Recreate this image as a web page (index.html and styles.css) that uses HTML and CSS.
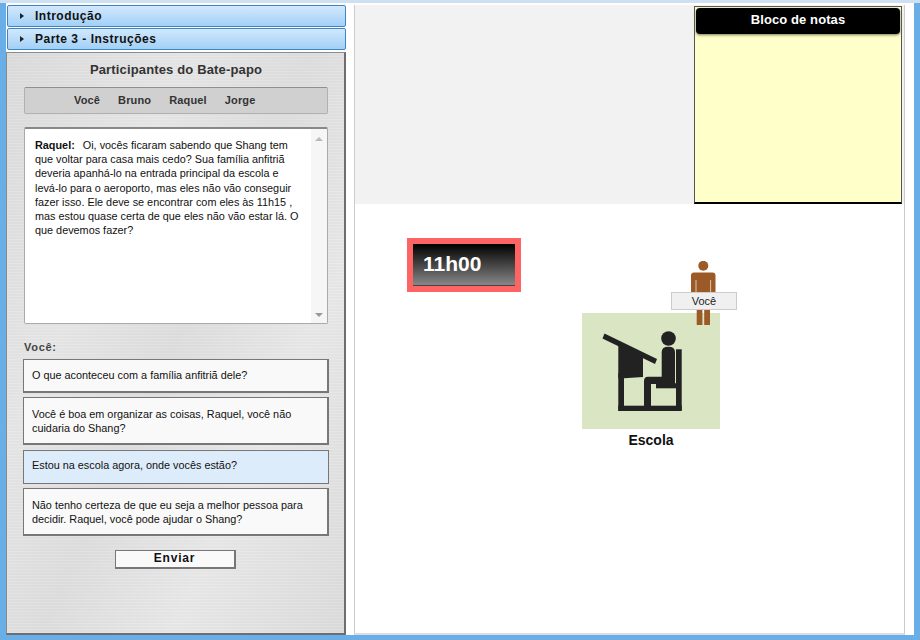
FILE: index.html
```html
<!DOCTYPE html>
<html lang="pt-BR">
<head>
  <meta charset="UTF-8">
  <title>Bate-papo</title>
  <link rel="stylesheet" href="styles.css">
</head>
<body>
  <div class="frame">
    <div class="left-col">
      <div class="acc-bar"><span class="acc-arrow"></span>Introdução</div>
      <div class="acc-bar"><span class="acc-arrow"></span>Parte 3 - Instruções</div>
      <div class="panel">
        <h2 class="panel-title">Participantes do Bate-papo</h2>
        <div class="people">
          <span>Você</span>
          <span>Bruno</span>
          <span>Raquel</span>
          <span>Jorge</span>
        </div>
        <div class="chat">
          <p class="chat-text"><strong class="speaker">Raquel:</strong>Oi, vocês ficaram sabendo que Shang tem que voltar para casa mais cedo? Sua família anfitriã deveria apanhá-lo na entrada principal da escola e levá-lo para o aeroporto, mas eles não vão conseguir fazer isso. Ele deve se encontrar com eles às 11h15 , mas estou quase certa de que eles não vão estar lá. O que devemos fazer?</p>
          <div class="scroll">
            <span class="scroll-up"></span>
            <span class="scroll-down"></span>
          </div>
        </div>
        <div class="you-label">Você:</div>
        <div class="options">
          <div class="option one-line">O que aconteceu com a família anfitriã dele?</div>
          <div class="option">Você é boa em organizar as coisas, Raquel, você não cuidaria do Shang?</div>
          <div class="option one-line selected">Estou na escola agora, onde vocês estão?</div>
          <div class="option">Não tenho certeza de que eu seja a melhor pessoa para decidir. Raquel, você pode ajudar o Shang?</div>
        </div>
        <button class="send-btn">Enviar</button>
      </div>
    </div>
    <div class="stage">
      <div class="stage-top">
        <div class="notes">
          <div class="notes-head">Bloco de notas</div>
        </div>
      </div>
      <div class="map">
        <div class="clock"><span>11h00</span></div>
        <div class="place">
          <svg class="place-icon" viewBox="0 0 138 116" width="138" height="116">
            <rect width="138" height="116" fill="#dae5c3"/>
            <g fill="#222">
              <!-- desk -->
              <path d="M22.500 20.500 L75 46 L73 51 L20.500 25.500 Z"/>
              <path d="M36.300 31 L61 43 L61 64 L42 65.300 L36.300 65.300 Z"/>
              <rect x="36.300" y="60" width="5.700" height="38"/>
              <rect x="36.300" y="92.700" width="63.400" height="5.300"/>
              <!-- chair -->
              <rect x="94" y="36.300" width="5.700" height="61"/>
              <rect x="74" y="70.300" width="20" height="5"/>
              <!-- person -->
              <circle cx="86.500" cy="25.500" r="7.300"/>
              <path d="M79.700 39 Q79.700 33.700 86.400 33.700 Q93 33.700 93 39 L93 71 L79.700 71 L69 71 L69 93 L62 93 L62 68 Q62 63.700 66 63.700 L79.700 63.700 Z"/>
            </g>
          </svg>
          <div class="place-name">Escola</div>
        </div>
        <div class="avatar">
          <svg viewBox="0 0 25 65" width="25" height="65">
            <g fill="#9c5a26">
              <circle cx="12.300" cy="4.800" r="5"/>
              <path d="M3 11.500 H21.500 Q24.500 11.500 24.500 14.500 V36 H19 V64 H13.200 V42 H11.400 V64 H5.700 V36 H0 V14.500 Q0 11.500 3 11.500 Z"/>
            </g>
            <path d="M5 19 V36 M19.600 19 V36" stroke="#d9c6b4" stroke-width="1" fill="none"/>
          </svg>
          <div class="avatar-name">Você</div>
        </div>
      </div>
    </div>
  </div>
</body>
</html>
```

FILE: styles.css
```css
html, body {
  margin: 0;
  height: 100%;
}
body {
  font-family: "Liberation Sans", Arial, sans-serif;
  overflow: hidden;
}
.frame {
  width: 920px;
  height: 640px;
  box-sizing: border-box;
  display: flex;
  gap: 8px;
  padding: 2px 6px 5px 6px;
  background-color: #6aaee8;
  border-top: 3px solid #cfe0f2;
  position: relative;
}
.frame::before {
  content: "";
  position: absolute;
  top: 0;
  left: 6px;
  right: 6px;
  bottom: 5px;
  background-color: #fff;
}
.left-col {
  width: 340px;
  display: flex;
  flex-direction: column;
  position: relative;
}
.acc-bar {
  height: 22px;
  margin: 0 0 1px 1px;
  box-sizing: border-box;
  border: 1px solid #3c86c8;
  border-radius: 2px;
  background: linear-gradient(#d2e8fc, #a2d0f7);
  color: #111;
  font-size: 12px;
  font-weight: bold;
  padding-left: 12px;
  display: flex;
  align-items: center;
  letter-spacing: 0.5px;
}
.acc-arrow {
  width: 0;
  height: 0;
  border-left: 4px solid #222;
  border-top: 3.5px solid transparent;
  border-bottom: 3.5px solid transparent;
  margin-right: 11px;
}
.panel {
  flex: 1;
  margin-top: 1px;
  box-sizing: border-box;
  padding: 0 16px 0 17px;
  border: 1px solid #8a8a8a;
  border-right: 2px solid #6e6e6e;
  border-bottom: 2px solid #6e6e6e;
  background: repeating-linear-gradient(0deg, rgba(255,255,255,0.07) 0 1px, rgba(0,0,0,0.01) 1px 3px), linear-gradient(115deg, #dcdcdc 0%, #e6e6e6 30%, #dedede 50%, #e8e8e8 72%, #dcdcdc 100%);
  display: flex;
  flex-direction: column;
}
.panel-title {
  margin: 9px 0 0;
  height: 25px;
  font-size: 13px;
  line-height: 16px;
  font-weight: bold;
  letter-spacing: 0.15px;
  color: #333;
  text-align: center;
}
.people {
  height: 27px;
  box-sizing: border-box;
  padding: 0 0 2px 49px;
  border: 1px solid #b0b0b0;
  border-top-color: #8f8f8f;
  border-radius: 2px;
  background-color: #d0d0d0;
  display: flex;
  align-items: center;
  gap: 18px;
  font-size: 11px;
  font-weight: bold;
  letter-spacing: 0.15px;
  color: #333;
}
.chat {
  height: 197px;
  margin-top: 13px;
  box-sizing: border-box;
  border: 1px solid #aaa;
  border-top: 2px solid #888;
  border-radius: 2px;
  background-color: #fff;
  display: flex;
}
.chat-text {
  flex: 1;
  margin: 0;
  padding: 9px 8px 0 10px;
  font-size: 10.850px;
  line-height: 14.200px;
  color: #111;
}
.speaker {
  margin-right: 8px;
}
.scroll {
  width: 16px;
  background-color: #f6f6f6;
  display: flex;
  flex-direction: column;
  justify-content: space-between;
  align-items: center;
  padding: 8px 0 6px;
}
.scroll-up, .scroll-down {
  width: 0;
  height: 0;
  border-left: 4px solid transparent;
  border-right: 4px solid transparent;
}
.scroll-up {
  border-bottom: 4px solid #bbb;
}
.scroll-down {
  border-top: 4px solid #999;
}
.you-label {
  margin-top: 16px;
  height: 19px;
  font-size: 11px;
  line-height: 14px;
  font-weight: bold;
  color: #444;
  letter-spacing: 0.7px;
}
.options {
  margin: 0 -1px;
  display: flex;
  flex-direction: column;
  gap: 4px;
}
.option {
  box-sizing: border-box;
  min-height: 34px;
  padding: 9px 8px 8px 8px;
  border: 1px solid #777;
  border-right-width: 2px;
  border-bottom-width: 2px;
  background-color: #f9f9f9;
  font-size: 10.850px;
  line-height: 14px;
  color: #111;
}
.option.one-line {
  padding-top: 8px;
}
.option.selected {
  margin-top: 1px;
  padding-top: 7px;
  border-width: 1px;
  background-color: #ddecfa;
}
.send-btn {
  align-self: center;
  width: 121px;
  height: 19px;
  margin: 14px 2px 0 0;
  padding: 0 0 2px;
  border: 1px solid #777;
  border-right-width: 2px;
  border-bottom-width: 2px;
  background-color: #f9f9f9;
  font-family: inherit;
  font-size: 12px;
  font-weight: bold;
  letter-spacing: 0.8px;
  color: #111;
}
.stage {
  width: 551px;
  box-sizing: border-box;
  position: relative;
  border-left: 1px solid #ccc;
  border-right: 1px solid #ccc;
  border-bottom: 2px solid #ddd;
  background-color: #fff;
  display: flex;
  flex-direction: column;
}
.stage-top {
  height: 199px;
  background-color: #f2f2f2;
  display: flex;
  justify-content: flex-end;
  padding-right: 2px;
}
.notes {
  width: 208px;
  height: 198px;
  margin-top: 1px;
  box-sizing: border-box;
  border: 1px solid #555;
  border-bottom: 2px solid #000;
  background-color: #ffffc9;
  padding: 1px;
}
.notes-head {
  height: 26px;
  border-radius: 4px;
  background-color: #000;
  box-shadow: 0 1px 3px #77775a;
  color: #fff;
  font-size: 13px;
  font-weight: bold;
  line-height: 23px;
  text-align: center;
  letter-spacing: 0.1px;
}
.map {
  flex: 1;
  position: relative;
}
.clock {
  position: absolute;
  left: 52px;
  top: 34px;
  width: 114px;
  height: 54px;
  box-sizing: border-box;
  border: 6px solid #ff6464;
  background: linear-gradient(#000, #8a8a8a);
  box-shadow: inset 0 -1px 0 #444;
}
.clock span {
  display: block;
  padding: 5px 0 0 10px;
  color: #fff;
  font-size: 21px;
  line-height: 30px;
  font-weight: bold;
}
.place {
  position: absolute;
  left: 227px;
  top: 109px;
  width: 138px;
}
.place-icon {
  display: block;
}
.place-name {
  margin-top: 3px;
  text-align: center;
  font-size: 14px;
  font-weight: bold;
  line-height: 16px;
  color: #111;
}
.avatar {
  position: absolute;
  left: 336px;
  top: 57px;
  width: 25px;
  height: 65px;
}
.avatar svg {
  display: block;
}
.avatar-name {
  position: absolute;
  left: -20px;
  top: 31px;
  width: 66px;
  height: 18px;
  box-sizing: border-box;
  border: 1px solid #ccc;
  background-color: #f0f0f0;
  font-size: 11px;
  line-height: 16px;
  text-align: center;
  color: #222;
}
```
